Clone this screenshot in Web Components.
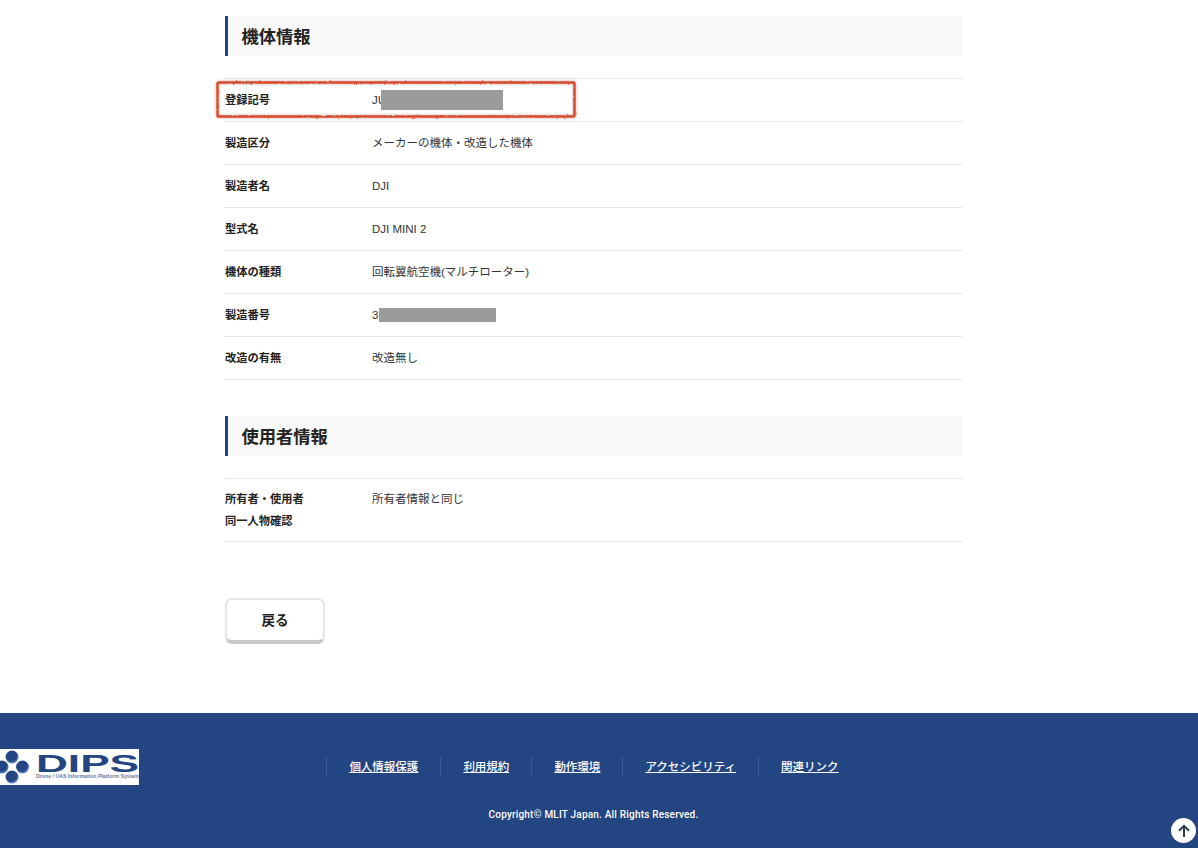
<!DOCTYPE html>
<html lang="ja">
<head>
<meta charset="utf-8">
<title>機体情報</title>
<style>
  html, body { margin: 0; padding: 0; background: #fff; }
  body {
    font-family: "Liberation Sans", "Noto Sans CJK JP", sans-serif;
    color: #222;
    overflow: hidden;
    height: 848px;
    position: relative;
  }
  main { display: block; width: 737px; margin-left: 225px; padding-top: 16px; height: 713px; box-sizing: border-box; }
</style>
</head>
<body>

<main>
  <section-heading>機体情報</section-heading>
  <info-list>
    <info-row label="登録記号">JU<mask-bar left="9" width="122" height="20"></mask-bar></info-row>
    <info-row label="製造区分">メーカーの機体・改造した機体</info-row>
    <info-row label="製造者名">DJI</info-row>
    <info-row label="型式名">DJI MINI 2</info-row>
    <info-row label="機体の種類">回転翼航空機(マルチローター)</info-row>
    <info-row label="製造番号">3<mask-bar left="7" width="117" height="14"></mask-bar></info-row>
    <info-row label="改造の有無">改造無し</info-row>
  </info-list>

  <section-heading style="margin-top:36px">使用者情報</section-heading>
  <info-list>
    <info-row label="所有者・使用者&#10;同一人物確認" style="padding:9px 0">所有者情報と同じ</info-row>
  </info-list>

  <back-button>戻る</back-button>
</main>

<site-footer>
  <dips-logo slot="logo"></dips-logo>
  <footer-link>個人情報保護</footer-link>
  <footer-link>利用規約</footer-link>
  <footer-link>動作環境</footer-link>
  <footer-link>アクセシビリティ</footer-link>
  <footer-link>関連リンク</footer-link>
</site-footer>

<red-callout></red-callout>
<to-top></to-top>

<script>
/**
 * Small helper, every element below just sets its html in an open shadow root
 */
class BaseEl extends HTMLElement {
    constructor() {
        super();
        this.attachShadow({ mode: 'open' });
    }
    connectedCallback() {
        this.shadowRoot.innerHTML = this.html();
    }
}

class SectionHeading extends BaseEl {
    html() {
        return `
            <style>
                :host {
                    display: flex;
                    align-items: center;
                    height: 40px;
                    box-sizing: border-box;
                    padding: 0 0 2px 13.5px;
                    border-left: 3px solid #24417f;
                    background-color: #f8f8f8;
                    font-size: 17.25px;
                    font-weight: 700;
                    color: #222;
                }
            </style>
            <slot></slot>
        `;
    }
}

class InfoList extends BaseEl {
    html() {
        return `
            <style>
                :host {
                    display: block;
                    margin-top: 22px;
                    border-top: 1px solid #e4e4e4;
                }
            </style>
            <slot></slot>
        `;
    }
}

class InfoRow extends BaseEl {
    html() {
        const label = this.getAttribute('label') || '';
        return `
            <style>
                :host {
                    display: grid;
                    grid-template-columns: 147px 1fr;
                    box-sizing: border-box;
                    padding: 10px 0;
                    border-bottom: 1px solid #e4e4e4;
                    font-size: 11.5px;
                    line-height: 22px;
                    color: #333;
                }
                .label {
                    font-size: 11.25px;
                    font-weight: 700;
                    color: #222;
                    white-space: pre-line;
                }
                .value { position: relative; }
            </style>
            <div class="label">${label}</div>
            <div class="value"><slot></slot></div>
        `;
    }
}

// grey bar that hides part of a value
class MaskBar extends BaseEl {
    html() {
        const left = this.getAttribute('left') || 0;
        const w = this.getAttribute('width') || 100;
        const h = this.getAttribute('height') || 16;
        return `
            <style>
                :host {
                    position: absolute;
                    left: ${left}px;
                    top: 50%;
                    width: ${w}px;
                    height: ${h}px;
                    margin-top: -${h / 2}px;
                    background-color: #9b9b9b;
                }
            </style>
        `;
    }
}

class BackButton extends BaseEl {
    html() {
        return `
            <style>
                :host {
                    display: flex;
                    align-items: center;
                    justify-content: center;
                    width: 100px;
                    height: 46px;
                    margin-top: 56px;
                    padding-bottom: 2px;
                    box-sizing: border-box;
                    background-color: #fff;
                    border: 2px solid #e6e6e6;
                    border-bottom: 4px solid #c9c9c9;
                    border-radius: 7px;
                    font-size: 13.5px;
                    font-weight: 700;
                    color: #222;
                    cursor: pointer;
                }
            </style>
            <slot></slot>
        `;
    }
}

class SiteFooter extends BaseEl {
    html() {
        return `
            <style>
                :host {
                    display: grid;
                    grid-template-columns: 225px 737px 1fr;
                    height: 135px;
                    box-sizing: border-box;
                    padding-top: 36px;
                    background-color: #234581;
                    color: #fff;
                    font-size: 11.5px;
                }
                .logo { display: block; }
                .center {
                    display: flex;
                    flex-direction: column;
                    align-items: center;
                    gap: 24px;
                }
                nav {
                    display: flex;
                    height: 35px;
                    align-items: center;
                }
                .copy {
                    font-size: 10px;
                    font-weight: 500;
                    letter-spacing: 0.2px;
                    line-height: 14px;
                    font-family: Roboto, "Noto Sans", sans-serif;
                }
            </style>
            <div class="logo"><slot name="logo"></slot></div>
            <div class="center">
                <nav><slot></slot></nav>
                <div class="copy">Copyright© MLIT Japan. All Rights Reserved.</div>
            </div>
        `;
    }
}

class FooterLink extends BaseEl {
    html() {
        return `
            <style>
                :host {
                    display: block;
                    padding: 0 22px;
                    border-left: 1px solid #3d5c94;
                    line-height: 20px;
                    font-weight: 500;
                    white-space: nowrap;
                }
                a { color: #fff; text-decoration: underline; }
            </style>
            <a href="#"><slot></slot></a>
        `;
    }
}

// the logo is four dots + wordmark on a white strip
class DipsLogo extends BaseEl {
    html() {
        return `
            <style>
                :host { display: block; width: 139px; height: 36px; background-color: #fff; }
                svg { display: block; }
            </style>
            <svg width="139" height="36" viewBox="0 0 139 36">
                <defs>
                    <radialGradient id="dot" cx="45%" cy="40%" r="60%">
                        <stop offset="65%" stop-color="#234581"/>
                        <stop offset="100%" stop-color="#5f8fd0"/>
                    </radialGradient>
                </defs>
                <g fill="url(#dot)">
                    <circle cx="12" cy="8" r="6.5"/>
                    <circle cx="2" cy="18" r="6.5"/>
                    <circle cx="22.5" cy="18" r="6.5"/>
                    <circle cx="12" cy="28" r="6.5"/>
                </g>
                <text x="36" y="23" textLength="103" lengthAdjust="spacingAndGlyphs"
                      font-family="'Liberation Sans', sans-serif" font-weight="700" font-size="24" fill="#234581">DIPS</text>
                <text x="36" y="29" textLength="103" lengthAdjust="spacingAndGlyphs"
                      font-family="'Liberation Sans', sans-serif" font-weight="700" font-size="4.8" fill="#6a7a98">Drone / UAS Information Platform System</text>
            </svg>
        `;
    }
}

// hand drawn red box from the annotated screenshot
class RedCallout extends BaseEl {
    html() {
        return `
            <style>
                :host { position: absolute; left: 210px; top: 75px; width: 372px; height: 48px; }
                svg { display: block; overflow: visible; }
            </style>
            <svg width="372" height="48" viewBox="0 0 372 48">
                <defs>
                    <filter id="rough" x="-5%" y="-30%" width="110%" height="160%">
                        <feTurbulence type="fractalNoise" baseFrequency="0.35" numOctaves="2" seed="4"/>
                        <feDisplacementMap in="SourceGraphic" scale="2.2"/>
                    </filter>
                    <filter id="soft" x="-5%" y="-30%" width="110%" height="160%">
                        <feGaussianBlur stdDeviation="1.6"/>
                    </filter>
                </defs>
                <rect x="7.5" y="7.5" width="357" height="34" rx="2" fill="none" stroke="#c9b3ab" stroke-width="3" filter="url(#soft)"/>
                <rect x="7.5" y="7.5" width="357" height="34" rx="1" fill="none" stroke="#d9492b" stroke-width="2.4" filter="url(#rough)"/>
            </svg>
        `;
    }
}

class ToTop extends BaseEl {
    html() {
        return `
            <style>
                :host {
                    position: absolute;
                    left: 1171px;
                    top: 818px;
                    width: 25px;
                    height: 25px;
                    border-radius: 50%;
                    background-color: #fff;
                    display: flex;
                    align-items: center;
                    justify-content: center;
                    cursor: pointer;
                }
                svg { display: block; }
            </style>
            <svg width="14" height="14" viewBox="0 0 14 14" fill="none" stroke="#2c3a5c" stroke-width="2">
                <path d="M7 13V2"/>
                <path d="M2 6.8L7 1.8l5 5"/>
            </svg>
        `;
    }
}

customElements.define('section-heading', SectionHeading);
customElements.define('info-list', InfoList);
customElements.define('info-row', InfoRow);
customElements.define('mask-bar', MaskBar);
customElements.define('back-button', BackButton);
customElements.define('site-footer', SiteFooter);
customElements.define('footer-link', FooterLink);
customElements.define('dips-logo', DipsLogo);
customElements.define('red-callout', RedCallout);
customElements.define('to-top', ToTop);
</script>
</body>
</html>
